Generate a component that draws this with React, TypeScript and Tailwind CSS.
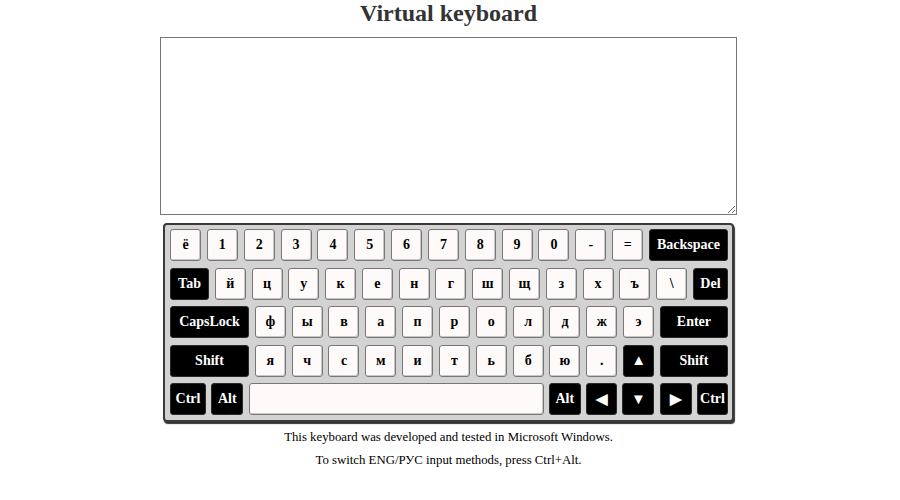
import React from "react";

type Key = { label: string; w: number; dark?: boolean; arrow?: boolean };

const k = (label: string, w = 31): Key => ({ label, w });
const d = (label: string, w: number, arrow = false): Key => ({ label, w, dark: true, arrow });

const rows: Key[][] = [
  [..."ё1234567890-=".split("").map((c) => k(c)), d("Backspace", 79)],
  [d("Tab", 39), ..."йцукенгшщзхъ\\".split("").map((c) => k(c)), d("Del", 35)],
  [d("CapsLock", 79), ..."фывапролджэ".split("").map((c) => k(c)), d("Enter", 68)],
  [
    d("Shift", 79),
    ..."ячсмитьбю.".split("").map((c) => k(c)),
    d("▲", 31, true),
    d("Shift", 68),
  ],
  [
    d("Ctrl", 36),
    d("Alt", 32),
    k("", 295),
    d("Alt", 32),
    d("◀", 31, true),
    d("▼", 32, true),
    d("▶", 32, true),
    d("Ctrl", 31),
  ],
];

function KeyButton({ item }: { item: Key }) {
  const base =
    "h-8 flex items-center justify-center rounded-[3px] font-bold leading-none select-none";
  const look = item.dark
    ? "bg-black text-white border border-[#2a2a2a]"
    : "bg-[#fffafa] text-black border border-[#777] shadow-[inset_-1px_-1px_0_#c8c8c8]";
  return (
    <div
      className={`${base} ${look} ${item.arrow ? "text-[15px]" : "text-[14px]"}`}
      style={{ width: item.w }}
    >
      {item.label}
    </div>
  );
}

export default function App() {
  return (
    <div
      className="w-[897px] flex flex-col items-center bg-white text-black"
      style={{ fontFamily: '"Liberation Serif", "Times New Roman", serif' }}
    >
      <h1 className="text-[24px] leading-[26px] font-bold text-[#333]">Virtual keyboard</h1>

      <textarea className="mt-[11px] w-[577px] h-[178px] border border-[#767676] bg-white resize outline-none" />

      <div className="mt-[8px] w-[571px] rounded-[4px] border-2 border-[#3a3a3a] bg-[#d3d3d3] pt-[4px] pb-[5px] pl-[5px] pr-[4px] shadow-[1px_2px_1px_#333]">
        <div className="flex flex-col gap-[6.5px]">
          {rows.map((row, i) => (
            <div key={i} className="flex justify-between">
              {row.map((item, j) => (
                <KeyButton key={j} item={item} />
              ))}
            </div>
          ))}
        </div>
      </div>

      <div className="mt-[4px] text-[12.8px] leading-[23px] text-black text-center">
        <p>This keyboard was developed and tested in Microsoft Windows.</p>
        <p>To switch ENG/РУС input methods, press Ctrl+Alt.</p>
      </div>
    </div>
  );
}
